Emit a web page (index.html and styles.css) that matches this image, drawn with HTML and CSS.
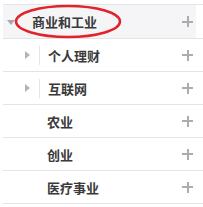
FILE: index.html
```html
<!DOCTYPE html>
<html>
<head>
<meta charset="utf-8">
<link rel="stylesheet" href="styles.css">
</head>
<body>
<div class="list">
  <div class="row row-top">
    <div class="row-inner">
      <span class="caret-down"></span>
      <span class="label label-top">商业和工业</span>
      <span class="plus"></span>
    </div>
    <svg class="circle" width="108" height="35" viewBox="0 0 108 35">
      <ellipse cx="54" cy="17.5" rx="52" ry="15.5" fill="none" stroke="#e0242b" stroke-width="2.5"/>
    </svg>
  </div>
  <div class="row">
    <span class="caret-right"></span>
    <span class="divider"></span>
    <span class="label">个人理财</span>
    <span class="plus"></span>
  </div>
  <div class="row">
    <span class="caret-right"></span>
    <span class="divider"></span>
    <span class="label">互联网</span>
    <span class="plus"></span>
  </div>
  <div class="row">
    <span class="label label-leaf">农业</span>
    <span class="plus"></span>
  </div>
  <div class="row">
    <span class="label label-leaf">创业</span>
    <span class="plus"></span>
  </div>
  <div class="row">
    <span class="label label-leaf">医疗事业</span>
    <span class="plus"></span>
  </div>
</div>
</body>
</html>
```
FILE: styles.css
```css
html, body {
  margin: 0;
  padding: 0;
  background: #fff;
}
body {
  font-family: "Noto Sans CJK SC", "Noto Sans", sans-serif;
  overflow: hidden;
}
.list {
  margin: 4px 0 0 3px;
  border-top: 1px solid #e4e4e6;
}
.row {
  position: relative;
  height: 32px;
  border-bottom: 1px solid #e4e4e6;
  display: flex;
  align-items: center;
}
.row-top {
  height: 33px;
}
.row-inner {
  display: flex;
  align-items: center;
  height: 100%;
  width: 193px;
  background: #f5f5f7;
}
.caret-down {
  width: 0;
  height: 0;
  border-left: 4px solid transparent;
  border-right: 4px solid transparent;
  border-top: 5px solid #a8a8a8;
  margin-left: 4px;
  margin-top: 1px;
}
.caret-right {
  width: 0;
  height: 0;
  border-top: 4px solid transparent;
  border-bottom: 4px solid transparent;
  border-left: 5px solid #b4b4b4;
  margin-left: 22px;
}
.divider {
  width: 1px;
  height: 19px;
  background: #e6e6e8;
  margin-left: 9px;
}
.label {
  font-size: 13px;
  font-weight: 700;
  color: #3a3a3a;
  margin-left: 8px;
}
.label-top {
  margin-left: 17px;
}
.label-leaf {
  margin-left: 44px;
}
.plus {
  margin-left: auto;
  width: 11px;
  height: 11px;
  position: relative;
}
.row .plus {
  margin-right: 10px;
}
.row-inner .plus {
  margin-right: 3px;
}
.plus::before,
.plus::after {
  content: "";
  position: absolute;
  background: #acacac;
}
.plus::before {
  left: 0;
  top: 4.5px;
  width: 11px;
  height: 2px;
}
.plus::after {
  left: 4.5px;
  top: 0;
  width: 2px;
  height: 11px;
}
.circle {
  position: absolute;
  left: 11px;
  top: -1px;
}
```
